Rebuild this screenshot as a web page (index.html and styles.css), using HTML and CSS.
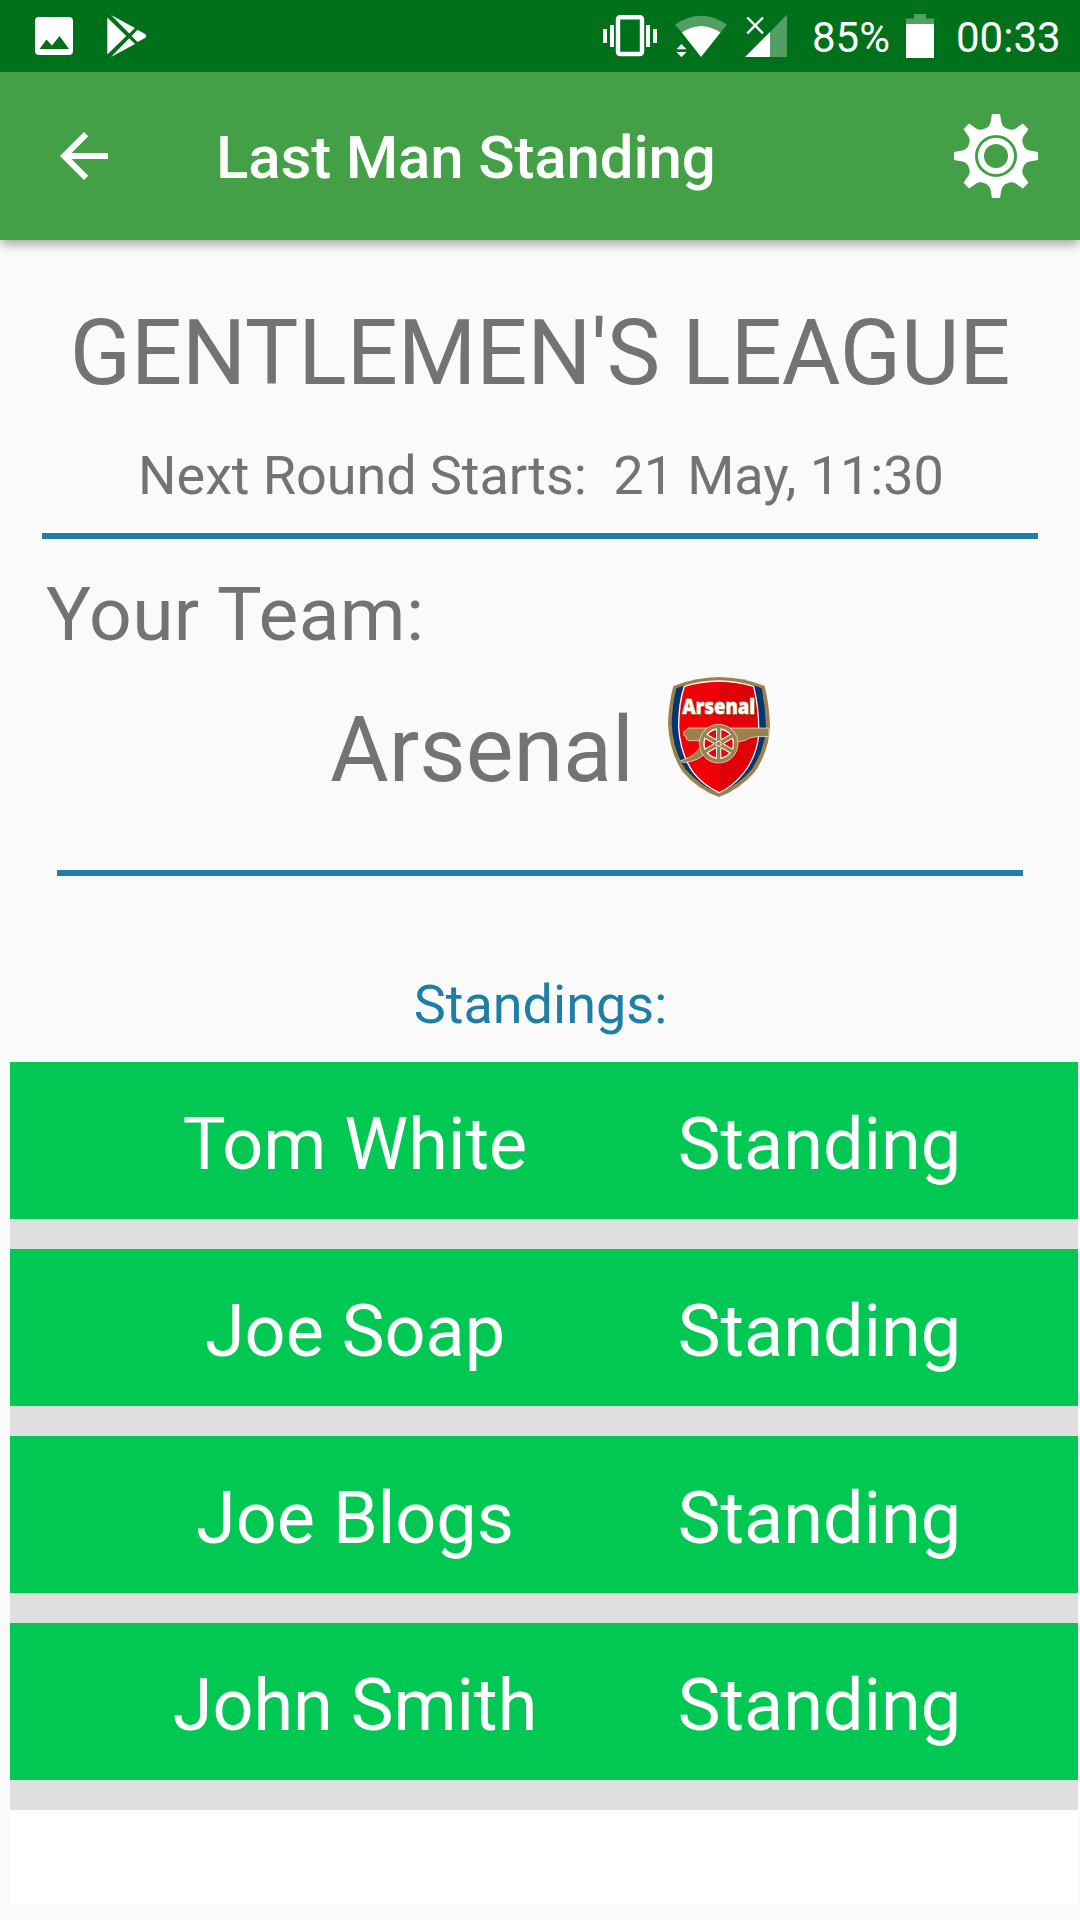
FILE: index.html
```html
<!DOCTYPE html>
<html lang="en">
<head>
<meta charset="utf-8">
<title>Last Man Standing</title>
<link rel="stylesheet" href="styles.css">
</head>
<body>
<div class="screen">
  <div class="status-bar">
    <svg class="status-left" width="160" height="72" viewBox="0 0 160 72">
      <path fill="#fff" fill-rule="evenodd" d="M39 17H69Q73 17 73 21V51Q73 55 69 55H39Q35 55 35 51V21Q35 17 39 17ZM39.500 49H69L59.500 36L52 45.500L46.500 39.500Z"/>
      <g fill="#fff">
        <path d="M107.300 17.500L126.300 36L107.300 54.500Z"/>
        <path d="M111 15L135 28L129.300 33.500Z"/>
        <path d="M111 57L135 44L129.300 38.300Z"/>
        <path d="M137.500 29.800L145 34Q147.500 36 145 38L137.500 42L131.500 36Z"/>
      </g>
    </svg>
    <div class="status-right">
      <svg width="190" height="72" viewBox="600 0 190 72">
        <g fill="#fff">
          <rect x="603" y="29" width="4" height="14"/>
          <rect x="610" y="25" width="4" height="22"/>
          <rect x="646" y="25" width="4" height="22"/>
          <rect x="653" y="29" width="4" height="14"/>
          <path d="M701 57L681.800 32.500Q701 19.500 720.500 32.500Z"/>
          <path d="M676.500 49.300L681.500 44L686.500 49.300ZM676.500 52L681.500 57.300L686.500 52Z"/>
          <path d="M745 57L770 32V57Z"/>
        </g>
        <rect x="618" y="17.300" width="24" height="36.700" rx="2" fill="none" stroke="#fff" stroke-width="4.400"/>
        <g fill="#fff" fill-opacity=".32">
          <path d="M681.800 32.500L675 24.700Q701 7 727 24.700L720.500 32.500Q701 19.500 681.800 32.500Z"/>
          <path d="M770 32L787 14.500V57H770Z"/>
        </g>
        <path d="M747.300 17.500L763 33.300M763 17.500L747.300 33.300" stroke="#fff" stroke-width="2.400"/>
      </svg>
      <span class="battery-level">85%</span>
      <svg class="battery" width="28" height="44" viewBox="0 0 28 44">
        <path fill="#fff" fill-opacity=".32" d="M8 0H20V4.500H28V10H0V4.500H8Z"/>
        <rect y="10" width="28" height="34" fill="#fff"/>
      </svg>
      <span class="clock">00:33</span>
    </div>
  </div>

  <header class="app-bar">
    <svg class="back" width="72" height="72" viewBox="0 0 24 24"><path fill="#fff" d="M20 11H7.830l5.590-5.590L12 4l-8 8 8 8 1.410-1.410L7.830 13H20v-2z"/></svg>
    <h1 class="title">Last Man Standing</h1>
    <svg class="gear" width="84" height="84" viewBox="-42 -42 84 84">
      <defs><path id="tooth" d="M0 0L-11.500 -27Q-6.500 -29 -5.500 -33.500L-4 -42H4L5.500 -33.500Q6.500 -29 11.500 -27Z"/></defs>
      <g fill="#fff">
        <circle r="29.400"/>
        <use href="#tooth"/>
        <use href="#tooth" transform="rotate(45)"/>
        <use href="#tooth" transform="rotate(90)"/>
        <use href="#tooth" transform="rotate(135)"/>
        <use href="#tooth" transform="rotate(180)"/>
        <use href="#tooth" transform="rotate(225)"/>
        <use href="#tooth" transform="rotate(270)"/>
        <use href="#tooth" transform="rotate(315)"/>
      </g>
      <circle r="19.500" fill="none" stroke="#43a047" stroke-width="3"/>
      <circle r="12" fill="#43a047"/>
    </svg>
  </header>

  <main class="content">
    <h2 class="league">GENTLEMEN'S LEAGUE</h2>
    <p class="next-round">Next Round Starts:&nbsp; 21 May, 11:30</p>
    <div class="rule rule-wide"></div>
    <p class="your-team">Your Team:</p>
    <div class="team">
      <span class="team-name">Arsenal</span>
      <svg class="crest" width="102" height="120" viewBox="84 51 306 360">
        <path fill="#9c824a" d="M100 78Q165 52 237 51Q310 52 374 78Q388 135 390 200Q388 270 345 335Q300 387 237 411Q172 387 128 335Q87 275 84 190Q86 130 100 78Z"/>
        <path fill="#063672" d="M109 85L134 76H341L365 85Q376 140 378 200Q376 265 336 327Q295 376 237 400Q180 378 137 328Q98 270 95 190Q97 132 109 85Z"/>
        <path fill="#ef0107" stroke="#fff" stroke-width="4" d="M133 79Q180 64 237 63Q290 64 341 79Q358 150 356 225Q350 290 310 340Q277 381 237 398Q190 376 160 338Q120 280 116 200Q116 130 133 79Z"/>
        <path fill="#c9000b" fill-opacity=".4" d="M237 65Q290 66 339 81Q356 150 354 225Q348 290 308 339Q276 379 237 396Z"/>
        <g fill="#9c824a" stroke="#fff" stroke-opacity=".75" stroke-width="2.500">
          <path d="M190 245Q173 283 136 297L122 302L130 308Q178 304 200 275Z"/>
          <path d="M131 215L137 212L145 204H387V230H350Q325 233 316 241L290 247H180L176 242H146L138 236V229L131 226Z"/>
          <circle cx="236" cy="251" r="58"/>
        </g>
        <circle cx="236" cy="251" r="44" fill="#ef0107" stroke="#fff" stroke-width="4"/>
        <g fill="none">
          <path stroke="#fff" stroke-width="16" d="M236 208V294M199 229.500L273 272.500M199 272.500L273 229.500"/>
          <path stroke="#9c824a" stroke-width="10" d="M236 204V298M195 227.500L277 274.500M195 274.500L277 227.500"/>
        </g>
        <circle cx="236" cy="251" r="13" fill="#9c824a"/>
        <circle cx="236" cy="251" r="8" fill="#9c824a" stroke="#fff" stroke-width="3"/>
        <text class="crest-name" x="127" y="161" textLength="219" lengthAdjust="spacingAndGlyphs">Arsenal</text>
      </svg>
    </div>
    <div class="rule rule-narrow"></div>
    <h3 class="standings-title">Standings:</h3>
    <div class="standings">
      <div class="row"><span>Tom White</span><span>Standing</span></div>
      <div class="row"><span>Joe Soap</span><span>Standing</span></div>
      <div class="row"><span>Joe Blogs</span><span>Standing</span></div>
      <div class="row"><span>John Smith</span><span>Standing</span></div>
    </div>
  </main>
</div>
</body>
</html>
```

FILE: styles.css
```css
* { box-sizing: border-box; }

body {
  margin: 0;
  background: #fafafa;
  font-family: Roboto, "Liberation Sans", sans-serif;
  color: #737373;
}

h1, h2, h3, p { margin: 0; font-weight: 400; }
svg { display: block; flex: none; }
span { white-space: nowrap; }

.screen {
  width: 1080px;
  height: 1920px;
  overflow: hidden;
}

.status-bar {
  display: flex;
  justify-content: space-between;
  height: 72px;
  background: #00701a;
  color: #fff;
  font-size: 42px;
  line-height: 50px;
}

.status-right {
  display: flex;
  width: 480px;
}

.battery-level { width: 94px; margin: 13px 0 0 22px; }
.battery { margin-top: 14px; }
.clock { margin: 13px 0 0 22px; }

.app-bar {
  display: flex;
  align-items: center;
  height: 168px;
  padding: 0 42px 0 48px;
  background: #43a047;
  color: #fff;
  box-shadow: 0 5px 11px -1px rgba(0, 0, 0, .36);
  clip-path: inset(0 0 -24px 0);
}

.title {
  flex: 1;
  padding: 4px 0 0 96px;
  font-size: 60px;
  font-weight: 500;
  line-height: 70px;
  letter-spacing: -.15px;
}

.content { padding-top: 61px; }

.league {
  font-size: 90px;
  line-height: 106px;
  letter-spacing: -.13px;
  text-align: center;
  white-space: nowrap;
}

.next-round {
  margin-top: 37px;
  padding-left: 2px;
  font-size: 54px;
  line-height: 64px;
  letter-spacing: -.07px;
  text-align: center;
}

.rule { height: 6px; background: #1f7ea6; }
.rule-wide { margin: 25px 42px 0; }
.rule-narrow { margin: 0 57px; }

.your-team {
  margin: 31px 0 0 46px;
  font-size: 75px;
  line-height: 88px;
  letter-spacing: .35px;
}

.team {
  display: flex;
  height: 193px;
  margin-top: 19px;
  padding-left: 330px;
}

.team-name {
  width: 338px;
  margin-top: 21px;
  font-size: 90px;
  line-height: 106px;
}

.crest-name {
  font: 800 64px "Open Sans", sans-serif;
  fill: #fff;
  stroke: #9c824a;
  stroke-width: 4px;
  paint-order: stroke;
}

.standings-title {
  margin-top: 97px;
  padding-left: 1px;
  color: #1f7ea6;
  font-size: 54px;
  line-height: 64px;
  text-align: center;
}

.standings {
  height: 843px;
  margin: 25px 2px 0 10px;
  background: #fff;
}

.row {
  display: grid;
  grid-template-columns: 464px 465px;
  height: 187px;
  padding: 41px 0 0 113px;
  border-bottom: 30px solid #dfdfdf;
  background: #00c853;
  color: #fff;
  font-size: 72px;
  line-height: 84px;
  text-align: center;
}
```
